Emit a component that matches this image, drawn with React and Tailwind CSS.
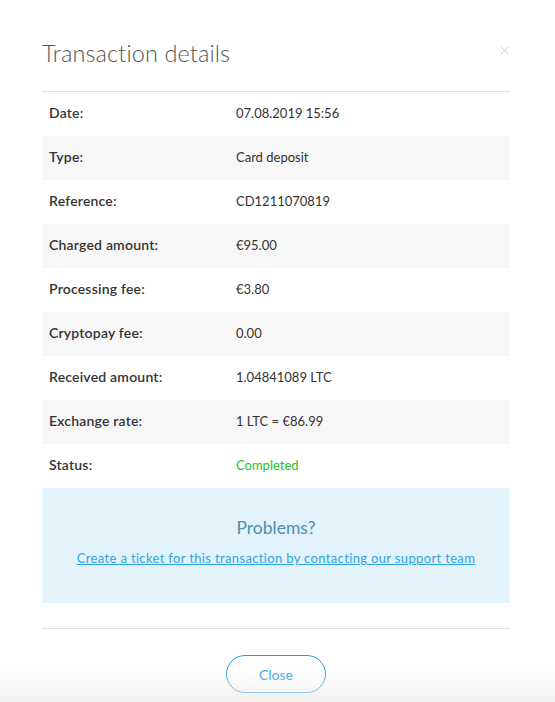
import { X } from 'lucide-react'

const rows = [
  { label: 'Date:', value: '07.08.2019 15:56' },
  { label: 'Type:', value: 'Card deposit' },
  { label: 'Reference:', value: 'CD1211070819' },
  { label: 'Charged amount:', value: '€95.00' },
  { label: 'Processing fee:', value: '€3.80' },
  { label: 'Cryptopay fee:', value: '0.00' },
  { label: 'Received amount:', value: '1.04841089 LTC' },
  { label: 'Exchange rate:', value: '1 LTC = €86.99' },
  { label: 'Status:', value: 'Completed', status: true },
]

export default function App() {
  return (
    <div className="relative min-h-[702px] bg-white font-['Lato','Open_Sans',sans-serif] text-[#333]">
      <div className="pl-[42px] pr-[45px] pt-[38px]">
        <div className="flex items-start justify-between">
          <h1 className="text-[23.5px] font-light leading-[30px] text-[#555] tracking-[0.1px]">Transaction details</h1>
          <button className="mt-[6px] -mr-[1px] text-[#c4c4c4]">
            <X size={13} strokeWidth={1.5} />
          </button>
        </div>

        <div className="mt-[23px] border-t border-[#e3e3e3]">
          {rows.map((r, idx) => (
            <div key={r.label} className={`flex items-center h-[44px] px-[7px] ${idx % 2 === 1 ? 'bg-[#f7f7f7]' : ''}`}>
              <span className="w-[187px] shrink-0 mb-[3px] text-[14px] leading-[18px] tracking-[0.2px] font-semibold text-[#333]">{r.label}</span>
              <span className={`mb-[2px] text-[13px] leading-[18px] ${r.status ? 'text-[#22c322]' : 'text-[#333]'}`}>{r.value}</span>
            </div>
          ))}
        </div>

        <div className="bg-[#e3f3fc] h-[115px] flex flex-col items-center pt-[29px]">
          <h2 className="text-[17.5px] leading-[22px] text-[#4d8eab]">Problems?</h2>
          <a href="#" className="mt-[10px] text-[13px] tracking-[0.35px] text-[#2ea3e3] underline">
            Create a ticket for this transaction by contacting our support team
          </a>
        </div>

        <div className="mt-[25px] border-t border-[#e3e3e3] flex justify-center pt-[26px]">
          <button className="w-[100px] h-[38px] rounded-full border border-[#1e9be0] text-[14px] text-[#1e9be0] bg-white">
            Close
          </button>
        </div>
      </div>
      <div className="pointer-events-none absolute bottom-0 left-0 right-0 h-[36px] bg-gradient-to-b from-white/0 to-[#eeeeee]/80" />
    </div>
  )
}
